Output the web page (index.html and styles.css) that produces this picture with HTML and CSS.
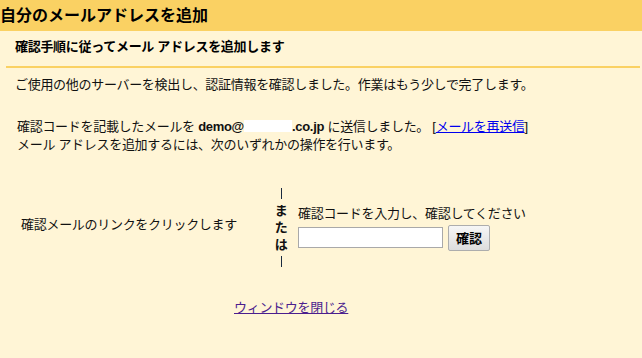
FILE: index.html
```html
<!DOCTYPE html>
<html lang="ja">
<head>
<meta charset="utf-8">
<title>自分のメールアドレスを追加</title>
<link rel="stylesheet" href="styles.css">
</head>
<body>
<div class="header">自分のメールアドレスを追加</div>
<div class="subhead">確認手順に従ってメール アドレスを追加します</div>
<p class="intro">ご使用の他のサーバーを検出し、認証情報を確認しました。作業はもう少しで完了します。</p>
<p class="info">確認コードを記載したメールを <b>demo@</b><span class="redact"></span><b>.co.jp</b> に送信しました。 [<a href="#" class="resend">メールを再送信</a>]<br>メール アドレスを追加するには、次のいずれかの操作を行います。</p>
<div class="options">
  <div class="opt-left">確認メールのリンクをクリックします</div>
  <div class="opt-or">
    <span class="bar"></span>
    <span>ま</span>
    <span>た</span>
    <span>は</span>
    <span class="bar"></span>
  </div>
  <div class="opt-right">
    <div class="label">確認コードを入力し、確認してください</div>
    <div class="code-row">
      <input type="text" class="code-input">
      <button class="confirm">確認</button>
    </div>
  </div>
</div>
<div class="close-wrap"><a href="#" class="close">ウィンドウを閉じる</a></div>
</body>
</html>
```
FILE: styles.css
```css
html, body {
  margin: 0;
  padding: 0;
}
body {
  background: #fff5d6;
  color: #111;
  font-family: "Liberation Sans", "Noto Sans CJK JP", sans-serif;
  font-size: 13px;
  line-height: 18px;
  letter-spacing: -0.3px;
  width: 642px;
  height: 358px;
  overflow: hidden;
}
.header {
  background: #fad163;
  height: 31px;
  line-height: 31px;
  font-size: 16px;
  font-weight: bold;
  letter-spacing: 0;
  color: #000;
}
.subhead {
  font-weight: bold;
  padding: 7px 0 10px 9px;
  margin: 0 2px 0 6px;
  border-bottom: 2px solid #fad163;
  color: #000;
}
.intro {
  margin: 8px 0 0 15px;
}
.info {
  margin: 24px 0 0 17px;
}
.redact {
  display: inline-block;
  width: 48px;
  height: 12px;
  background: #fff;
  vertical-align: -1px;
}
.resend {
  color: #0000ee;
}
.options {
  display: flex;
  align-items: center;
  margin-top: 31px;
}
.opt-left {
  width: 258px;
  text-align: center;
  padding-bottom: 5px;
}
.opt-or {
  width: 18px;
  margin-left: 14px;
  display: flex;
  flex-direction: column;
  align-items: center;
  font-weight: bold;
  line-height: 17px;
}
.opt-or span {
  height: 17px;
}
.opt-or .bar {
  display: flex;
  justify-content: center;
  align-items: center;
}
.opt-or .bar::before {
  content: "";
  width: 1px;
  height: 11px;
  background: #1a2a40;
}
.opt-right {
  margin-left: 8px;
}
.label {
  height: 18px;
}
.code-row {
  display: flex;
  align-items: center;
  margin-top: 2px;
}
.code-input {
  box-sizing: border-box;
  width: 145px;
  height: 21px;
  border: 1px solid #a9a9a9;
  background: #fff;
  margin: 0;
  padding: 0 2px;
}
.confirm {
  box-sizing: border-box;
  width: 42px;
  height: 26px;
  margin-left: 5px;
  border: 1px solid #adadad;
  border-radius: 2px;
  background: linear-gradient(#f6f6f6, #dddddd);
  font-family: "Liberation Sans", "Noto Sans CJK JP", sans-serif;
  font-size: 13px;
  font-weight: bold;
  color: #000;
  padding: 0;
}
.close-wrap {
  margin: 29px 0 0 234px;
}
.close {
  color: #4b1e8e;
}
```
